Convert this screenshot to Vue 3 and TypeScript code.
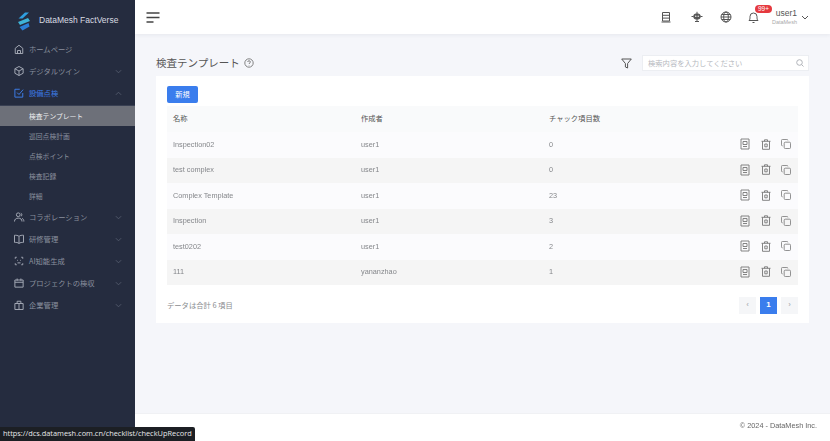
<script setup lang="ts">
interface MenuItem { label: string; icon: string; arrow?: 'down' | 'up'; active?: boolean }
const top: MenuItem[] = [
  { label: 'ホームページ', icon: 'M3 7l5-4 5 4v7H3zM6 14v-4h4v4' },
  { label: 'デジタルツイン', icon: 'M8 2l5.500 3v6L8 14l-5.500-3V5zM2.500 5L8 8l5.500-3M8 8v6', arrow: 'down' },
  { label: '設備点検', icon: 'M13 8v5.500H2.500V3H9M5.500 7.500L8 10l5.500-6.500', arrow: 'up', active: true },
]
const subs = ['検査テンプレート', '巡回点検計画', '点検ポイント', '検査記録', '詳細']
const bottom: MenuItem[] = [
  { label: 'コラボレーション', icon: 'M7 7.500a2.500 2.500 0 1 0 0-5 2.500 2.500 0 0 0 0 5zM2 14c0-3 2-4.500 5-4.500s5 1.500 5 4.500M10.500 2.800a2.500 2.500 0 0 1 0 4.400M12 9.800c1.500.5 2.500 2 2.500 4.200', arrow: 'down' },
  { label: '研修管理', icon: 'M8 4.500C6.500 3 4 3 2 3v9.500c2 0 4.500 0 6 1.500 1.500-1.500 4-1.500 6-1.500V3c-2 0-4.500 0-6 1.500zM8 4.500V14', arrow: 'down' },
  { label: 'AI知能生成', icon: 'M3 5V3h2M11 3h2v2M13 11v2h-2M5 13H3v-2M6 6.500v1M10 6.500v1M6 10.500h4', arrow: 'down' },
  { label: 'プロジェクトの検収', icon: 'M2.500 4h11v9.500h-11zM2.500 7h11M5.500 2v3M10.500 2v3', arrow: 'down' },
  { label: '企業管理', icon: 'M2.500 6h11v8h-11zM5.500 6V3h5v3M8 6v8', arrow: 'down' },
]
const rows = [
  { name: 'Inspection02', author: 'user1', count: 0 },
  { name: 'test complex', author: 'user1', count: 0 },
  { name: 'Complex Template', author: 'user1', count: 23 },
  { name: 'Inspection', author: 'user1', count: 3 },
  { name: 'test0202', author: 'user1', count: 2 },
  { name: '111', author: 'yananzhao', count: 1 },
]
</script>

<template>
  <div class="app">
    <aside class="side">
      <div class="brand">
        <svg class="logo" width="14" height="19" viewBox="0 0 14 19">
          <path d="M8 0.500L12 0.500 5.500 6.500 1.500 6.500z" fill="#2f9fe0" />
          <path d="M1 10l10-4 2 3-10 4z" fill="#3fb4d8" />
          <path d="M2.500 15l9-4 1 3.500-7 4z" fill="#2c7fd6" />
        </svg>
        <span>DataMesh FactVerse</span>
      </div>
      <nav class="nav">
        <div v-for="m in top" :key="m.label" class="item" :class="{ active: m.active }">
          <svg class="ico" width="12" height="12" viewBox="0 0 16 16"><path :d="m.icon" /></svg>
          <span class="lbl">{{ m.label }}</span>
          <svg v-if="m.arrow" class="arr" width="7" height="5" viewBox="0 0 8 5">
            <path :d="m.arrow === 'down' ? 'M1 1l3 3 3-3' : 'M1 4l3-3 3 3'" />
          </svg>
        </div>
        <div class="subs">
          <div v-for="(s, i) in subs" :key="s" class="sub" :class="{ on: i === 0 }">{{ s }}</div>
        </div>
        <div v-for="m in bottom" :key="m.label" class="item">
          <svg class="ico" width="12" height="12" viewBox="0 0 16 16"><path :d="m.icon" /></svg>
          <span class="lbl">{{ m.label }}</span>
          <svg class="arr" width="7" height="5" viewBox="0 0 8 5"><path d="M1 1l3 3 3-3" /></svg>
        </div>
      </nav>
    </aside>

    <div class="right">
      <header class="head">
        <svg class="burger" width="14" height="11" viewBox="0 0 14 11"><path d="M0.500 1h13M0.500 5.500h13M0.500 10h7" /></svg>
        <div class="tools">
          <svg class="tool" width="12" height="12" viewBox="0 0 12 12"><path d="M2.500 1.500h7v8.500h-7zM2.500 4.300h7M2.500 7.100h7M1.500 11h9" /></svg>
          <svg class="tool" width="12" height="12" viewBox="0 0 12 12"><rect x="2.800" y="3" width="6.400" height="5" rx="2" fill="#555" /><path d="M6 .8V3M.5 5.500h2M9.500 5.500h2M4 10.500h4M6 8v2.500" /><circle cx="4.800" cy="5.300" r=".7" fill="#fff" stroke="none" /><circle cx="7.200" cy="5.300" r=".7" fill="#fff" stroke="none" /></svg>
          <svg class="tool" width="12" height="12" viewBox="0 0 12 12"><circle cx="6" cy="6" r="5" /><ellipse cx="6" cy="6" rx="2.300" ry="5" /><path d="M1 6h10M1.800 3.500h8.400M1.800 8.500h8.400" /></svg>
          <div class="bell">
            <svg class="tool" width="11" height="13" viewBox="0 0 11 13"><path d="M1 9.500c1-1 1-2 1-4a3.500 3.500 0 0 1 7 0c0 2 0 3 1 4zM4.500 11.500h2" /></svg>
            <span class="badge">99+</span>
          </div>
          <div class="user">
            <span class="uname">user1</span>
            <span class="org">DataMesh</span>
          </div>
          <svg class="uarr" width="8" height="5" viewBox="0 0 8 5"><path d="M1 1l3 3 3-3" /></svg>
        </div>
      </header>

      <main class="main">
        <div class="titlebar">
          <h1>検査テンプレート</h1>
          <svg class="help" width="10" height="10" viewBox="0 0 10 10"><circle cx="5" cy="5" r="4.200" /><path d="M3.700 4c0-1.700 2.700-1.700 2.700 0 0 1-1.400 1-1.400 2M5 7.200v.4" /></svg>
          <svg class="filter" width="11" height="11" viewBox="0 0 11 11"><path d="M.7 1h9.600L6.600 5.500V10L4.400 9V5.500z" /></svg>
          <div class="search">
            <span>検索内容を入力してください</span>
            <svg width="8" height="8" viewBox="0 0 8 8"><circle cx="3.500" cy="3.500" r="2.800" /><path d="M5.500 5.500L7.500 7.500" /></svg>
          </div>
        </div>

        <section class="card">
          <button class="new">新規</button>
          <div class="table">
            <div class="row th">
              <span class="c1">名称</span><span class="c2">作成者</span><span class="c3">チャック項目数</span>
            </div>
            <div v-for="(r, i) in rows" :key="r.name" class="row td" :class="{ odd: i % 2 === 1 }">
              <span class="c1">{{ r.name }}</span>
              <span class="c2">{{ r.author }}</span>
              <span class="c3">{{ r.count }}</span>
              <span class="ops">
                <svg width="10" height="12" viewBox="0 0 10 12"><path d="M1 1h8v10H1zM3 3.500h4v3H3zM3 8.500h4" /></svg>
                <svg width="10" height="11" viewBox="0 0 10 11"><path d="M.5 2.300h9M3.500 2.300V.8h3v1.500M1.500 2.300v8h7v-8M3.800 5h2.400v2.800H3.800z" /></svg>
                <svg width="10" height="10" viewBox="0 0 11 11"><rect x="3.500" y="3.500" width="7" height="7" rx="1.200" /><path d="M7.500 1.500V1.300C7.500.9 7.100.5 6.500.5H1.500C.9.500.5.900.5 1.500v5c0 .6.400 1 1 1h.3" /></svg>
              </span>
            </div>
          </div>
          <div class="foot">
            <span class="total">データは合計 6 項目</span>
            <div class="pager">
              <span class="pg">‹</span>
              <span class="pg cur">1</span>
              <span class="pg">›</span>
            </div>
          </div>
        </section>
      </main>

      <footer class="footer"><span>© 2024 - DataMesh Inc.</span></footer>
    </div>

    <div class="status">https://dcs.datamesh.com.cn/checklist/checkUpRecord</div>
  </div>
</template>

<style>
html, body { margin: 0; padding: 0; overflow: hidden; }
</style>

<style scoped>
.app { display: flex; width: 830px; height: 441px; position: relative; overflow: hidden; font-family: "Noto Sans CJK JP", "Liberation Sans", sans-serif; background: #f5f6fa; }
.side { width: 135px; flex: none; background: #252c3f; box-sizing: border-box; color: #8f95a3; }
.brand { height: 38px; box-sizing: border-box; padding: 2px 0 0 17px; display: flex; align-items: center; gap: 8px; color: #d8dbe2; font: 8.500px "Liberation Sans", sans-serif; white-space: nowrap; }
.logo { flex: none; margin-top: 2px; }
.nav { display: flex; flex-direction: column; }
.item { height: 22px; display: flex; align-items: center; padding: 0 13px; font-size: 7.300px; color: #8a909e; }
.item.active { color: #3d7ce8; }
.ico { flex: none; margin-right: 4px; fill: none; stroke: #a4a9b5; stroke-width: 1.300; }
.active .ico { stroke: #3d7ce8; }
.lbl { flex: 1; white-space: nowrap; }
.arr { flex: none; fill: none; stroke: #565d6e; stroke-width: 1; }
.subs { display: flex; flex-direction: column; border-top: 1px solid #394053; margin-top: 1px; }
.sub { height: 20px; line-height: 20px; padding-left: 29px; font-size: 6.800px; color: #8a909e; }
.sub.on { background: #6d7079; color: #eceef0; }
.right { flex: 1; min-width: 0; display: flex; flex-direction: column; }
.head { height: 34px; flex: none; background: #fff; box-shadow: 0 1px 4px rgba(30, 40, 70, .07); display: flex; align-items: center; padding: 0 21px 0 11px; position: relative; }
.burger { fill: none; stroke: #444; stroke-width: 1.300; }
.tools { margin-left: auto; display: flex; align-items: center; }
.tool { fill: none; stroke: #555; stroke-width: 1; margin-right: 17px; display: block; }
.tool:first-child { margin-right: 18px; margin-left: -1px; transform: translateX(-1px); }
.bell { position: relative; margin-right: 13px; }
.bell .tool { margin: 0; }
.badge { position: absolute; left: 6px; top: -6px; height: 8px; padding: 0 3px; background: #e5393f; color: #fff; font: 6.500px/8px "Liberation Sans", sans-serif; border-radius: 4px; }
.user { display: flex; flex-direction: column; align-items: flex-end; margin-right: 4px; width: 24px; }
.uname { font: 8.500px/11px "Liberation Sans", sans-serif; color: #555; white-space: nowrap; }
.org { font: 5.500px/7px "Liberation Sans", sans-serif; color: #aaa; }
.uarr { fill: none; stroke: #555; stroke-width: 1; }
.main { flex: 1; min-height: 0; padding: 16px 21px 0; background: #f5f6fa; }
.titlebar { display: flex; align-items: center; height: 26px; }
h1 { margin: 0 0 2px; font-size: 10.500px; font-weight: 400; color: #555; }
.help { margin-left: 4px; fill: none; stroke: #666; stroke-width: .8; }
.filter { margin-left: auto; margin-right: 10px; fill: none; stroke: #555; stroke-width: 1; }
.search { width: 167px; height: 16px; box-sizing: border-box; background: #fff; border: 1px solid #eceef2; display: flex; align-items: center; justify-content: space-between; padding: 0 4px 0 5px; font-size: 7.300px; color: #b5b8be; }
.search svg { fill: none; stroke: #b0b3b9; stroke-width: 1; }
.card { background: #fff; height: 247px; box-sizing: border-box; padding: 10px 11px 0; }
.new { display: block; width: 31px; height: 17px; padding: 0 0 1px; border: 0; border-radius: 2px; background: #3a7ded; color: #fff; font: 7.200px "Noto Sans CJK JP", sans-serif; }
.table { margin-top: 3px; }
.row { display: flex; align-items: center; padding-left: 6px; font-size: 7.300px; }
.th { height: 26px; box-sizing: border-box; padding-bottom: 2px; background: #f9fafb; color: #555; }
.td { height: 25.500px; box-sizing: border-box; padding-bottom: 1px; color: #85878b; background: #fbfbfd; font-family: "Liberation Sans", "Noto Sans CJK JP", sans-serif; }
.td > span { will-change: opacity; }
.td.odd { background: #f5f5f5; }
.c1 { width: 188px; }
.c2 { width: 188px; }
.c3 { flex: 1; }
.ops { display: flex; align-items: center; gap: 10.500px; padding-right: 7px; }
.ops svg { fill: none; stroke: #777; stroke-width: .9; display: block; }
.foot { display: flex; align-items: center; justify-content: space-between; margin-top: 12px; }
.total { font-size: 7.300px; color: #8a8c90; margin-bottom: 2px; }
.pager { display: flex; gap: 4px; }
.pg { width: 17px; height: 17px; text-align: center; background: #f5f6f8; color: #b8bac0; font: 700 8px/16px "Liberation Sans", sans-serif; }
.pg.cur { background: #3a7ded; color: #fff; }
.footer { height: 28px; flex: none; background: #fff; border-top: 1px solid #f0f1f4; box-sizing: border-box; text-align: right; padding-right: 13px; color: #666; font: 7.300px/24px "Liberation Sans", sans-serif; }
.footer span { display: inline-block; will-change: opacity; }
.status { position: absolute; left: 0; bottom: 0; width: 195px; height: 14px; box-sizing: border-box; background: #1c1f24; color: #e6e8ea; font: 7.400px/13px "Open Sans", sans-serif; padding-left: 3px; white-space: nowrap; border-top-right-radius: 2px; }
</style>
